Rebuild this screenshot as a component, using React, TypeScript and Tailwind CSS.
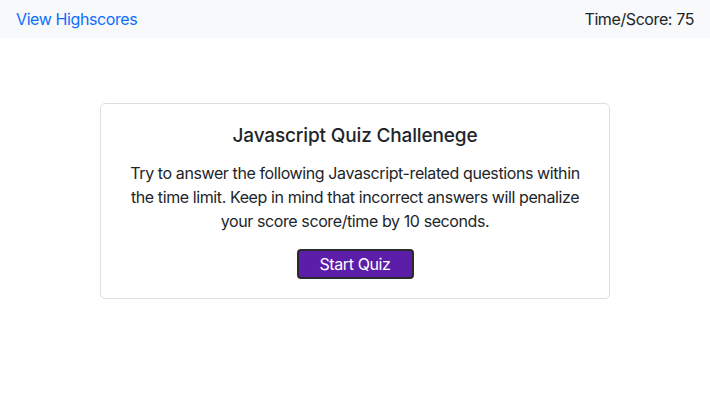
export default function App() {
  return (
    <div className="min-h-screen bg-white tracking-[-0.4px] text-[#212529]" style={{ fontFamily: 'Inter, "Noto Sans", sans-serif' }}>
      <nav className="flex h-[38px] items-center justify-between bg-[#f8f9fa] px-4">
        <a href="#" className="text-base text-[#0d6efd]">
          View Highscores
        </a>
        <span className="text-base">Time/Score: 75</span>
      </nav>

      <div className="flex justify-center pt-[65px]">
        <div className="w-[510px] rounded-[5px] border border-[#dfdfdf] px-4 pt-[20px] pb-[19px] text-center">
          <h5 className="mb-[13px] text-[19px] leading-[24px] font-medium tracking-[-0.15px]">Javascript Quiz Challenege</h5>
          <p className="text-base leading-6">
            Try to answer the following Javascript-related questions within the time limit. Keep in mind that
            incorrect answers will penalize your score score/time by 10 seconds.
          </p>
          <button className="mt-4 h-[30px] w-[117px] rounded-[4px] border-2 border-[#2b2b2b] bg-[#5c1ea8] text-base text-white">
            Start Quiz
          </button>
        </div>
      </div>
    </div>
  )
}
